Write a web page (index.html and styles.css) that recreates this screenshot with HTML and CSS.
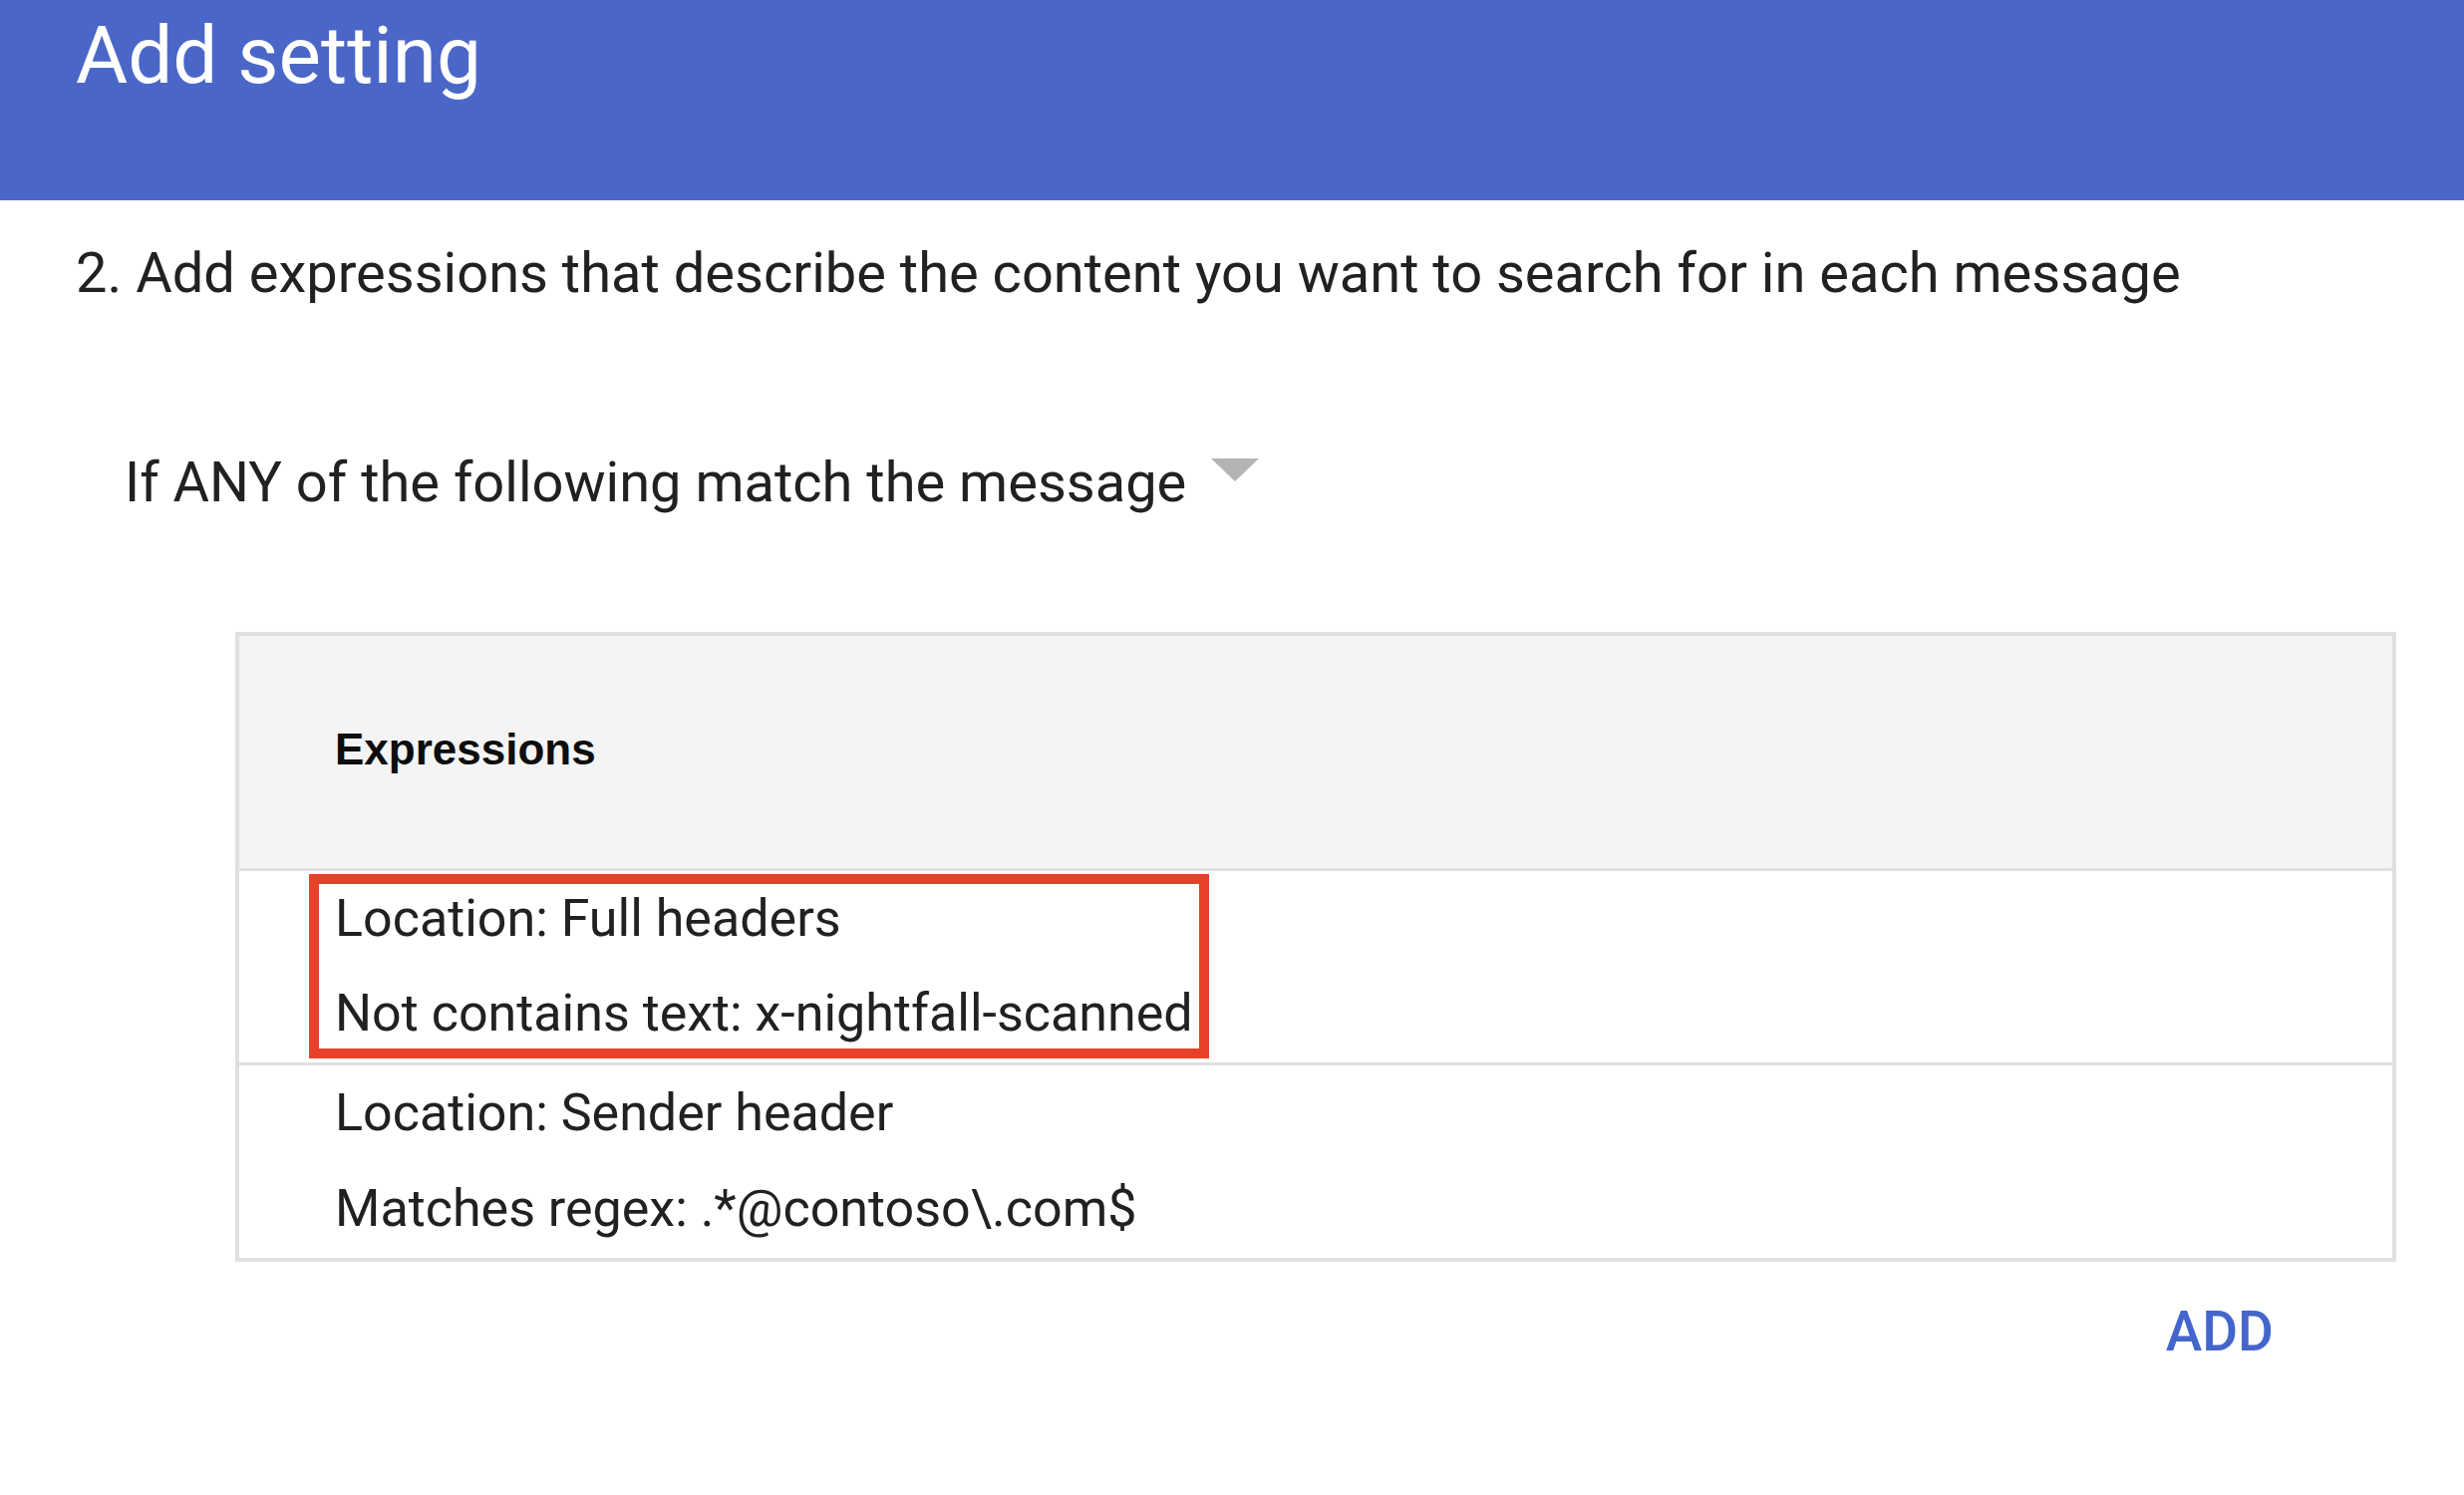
FILE: index.html
```html
<!DOCTYPE html>
<html lang="en">
<head>
<meta charset="utf-8">
<title>Add setting</title>
<link rel="stylesheet" href="styles.css">
</head>
<body>
  <header class="topbar">
    <h1 class="title">Add setting</h1>
  </header>
  <main class="content">
    <p class="step">2. Add expressions that describe the content you want to search for in each message</p>
    <div class="match-row">
      <span class="match-label">If ANY of the following match the message</span>
      <span class="caret" aria-hidden="true"></span>
    </div>
    <div class="expr-table">
      <div class="expr-head">Expressions</div>
      <div class="expr-row expr-row--first">
        <div class="highlight">
          <div class="expr-line">Location: Full headers</div>
          <div class="expr-line">Not contains text: x-nightfall-scanned</div>
        </div>
      </div>
      <div class="expr-row expr-row--plain">
        <div class="expr-line">Location: Sender header</div>
        <div class="expr-line">Matches regex: .*@contoso\.com$</div>
      </div>
    </div>
    <div class="actions">
      <span class="add-btn">ADD</span>
    </div>
  </main>
</body>
</html>
```

FILE: styles.css
```css
html, body {
  margin: 0;
  padding: 0;
  background: #ffffff;
}

body {
  font-family: Roboto, "Noto Sans", "Liberation Sans", Arial, sans-serif;
  color: #212121;
}

.topbar {
  box-sizing: border-box;
  height: 201px;
  background: #4a67c8;
  padding: 6px 0 0 76px;
}

.title {
  margin: 0;
  font-weight: 400;
  font-size: 80px;
  line-height: 100px;
  color: #ffffff;
}

.content {
  display: flex;
  flex-direction: column;
}

.step {
  margin: 33px 0 0 76px;
  font-size: 56px;
  line-height: 80px;
  color: #212121;
}

.match-row {
  display: flex;
  align-items: flex-start;
  margin: 130px 0 0 125px;
}

.match-label {
  font-size: 56px;
  line-height: 80px;
  color: #212121;
}

.caret {
  width: 0;
  height: 0;
  margin: 16px 0 0 25px;
  border-left: 24px solid transparent;
  border-right: 24px solid transparent;
  border-top: 23px solid #b4b4b4;
}

.expr-table {
  box-sizing: border-box;
  width: 2168px;
  margin: 110px 0 0 236px;
  border: 4px solid #e0e0e0;
  display: flex;
  flex-direction: column;
}

.expr-head {
  box-sizing: border-box;
  height: 236px;
  background: #f4f4f4;
  border-bottom: 3px solid #e0e0e0;
  padding: 84px 0 0 96px;
  font-family: "Liberation Sans", Arial, sans-serif;
  font-size: 44px;
  line-height: 60px;
  font-weight: 700;
  color: #0d0d0d;
}

.expr-row {
  font-size: 52px;
  line-height: 60px;
  color: #212121;
}

.expr-row--first {
  display: flex;
  padding: 3px 0 4px 70px;
  border-bottom: 3px solid #e0e0e0;
}

.highlight {
  display: flex;
  flex-direction: column;
  gap: 35px;
  border: 10px solid #e8412a;
  padding: 5px 6px 5px 16px;
}

.expr-row--plain {
  display: flex;
  flex-direction: column;
  gap: 36px;
  padding: 18px 0 19px 96px;
}

.expr-line {
  white-space: nowrap;
}

.actions {
  box-sizing: border-box;
  width: 2168px;
  margin: 35px 0 0 236px;
  padding-right: 123px;
  display: flex;
  justify-content: flex-end;
}

.add-btn {
  font-size: 55px;
  line-height: 70px;
  font-weight: 500;
  color: #4466cc;
}
```
